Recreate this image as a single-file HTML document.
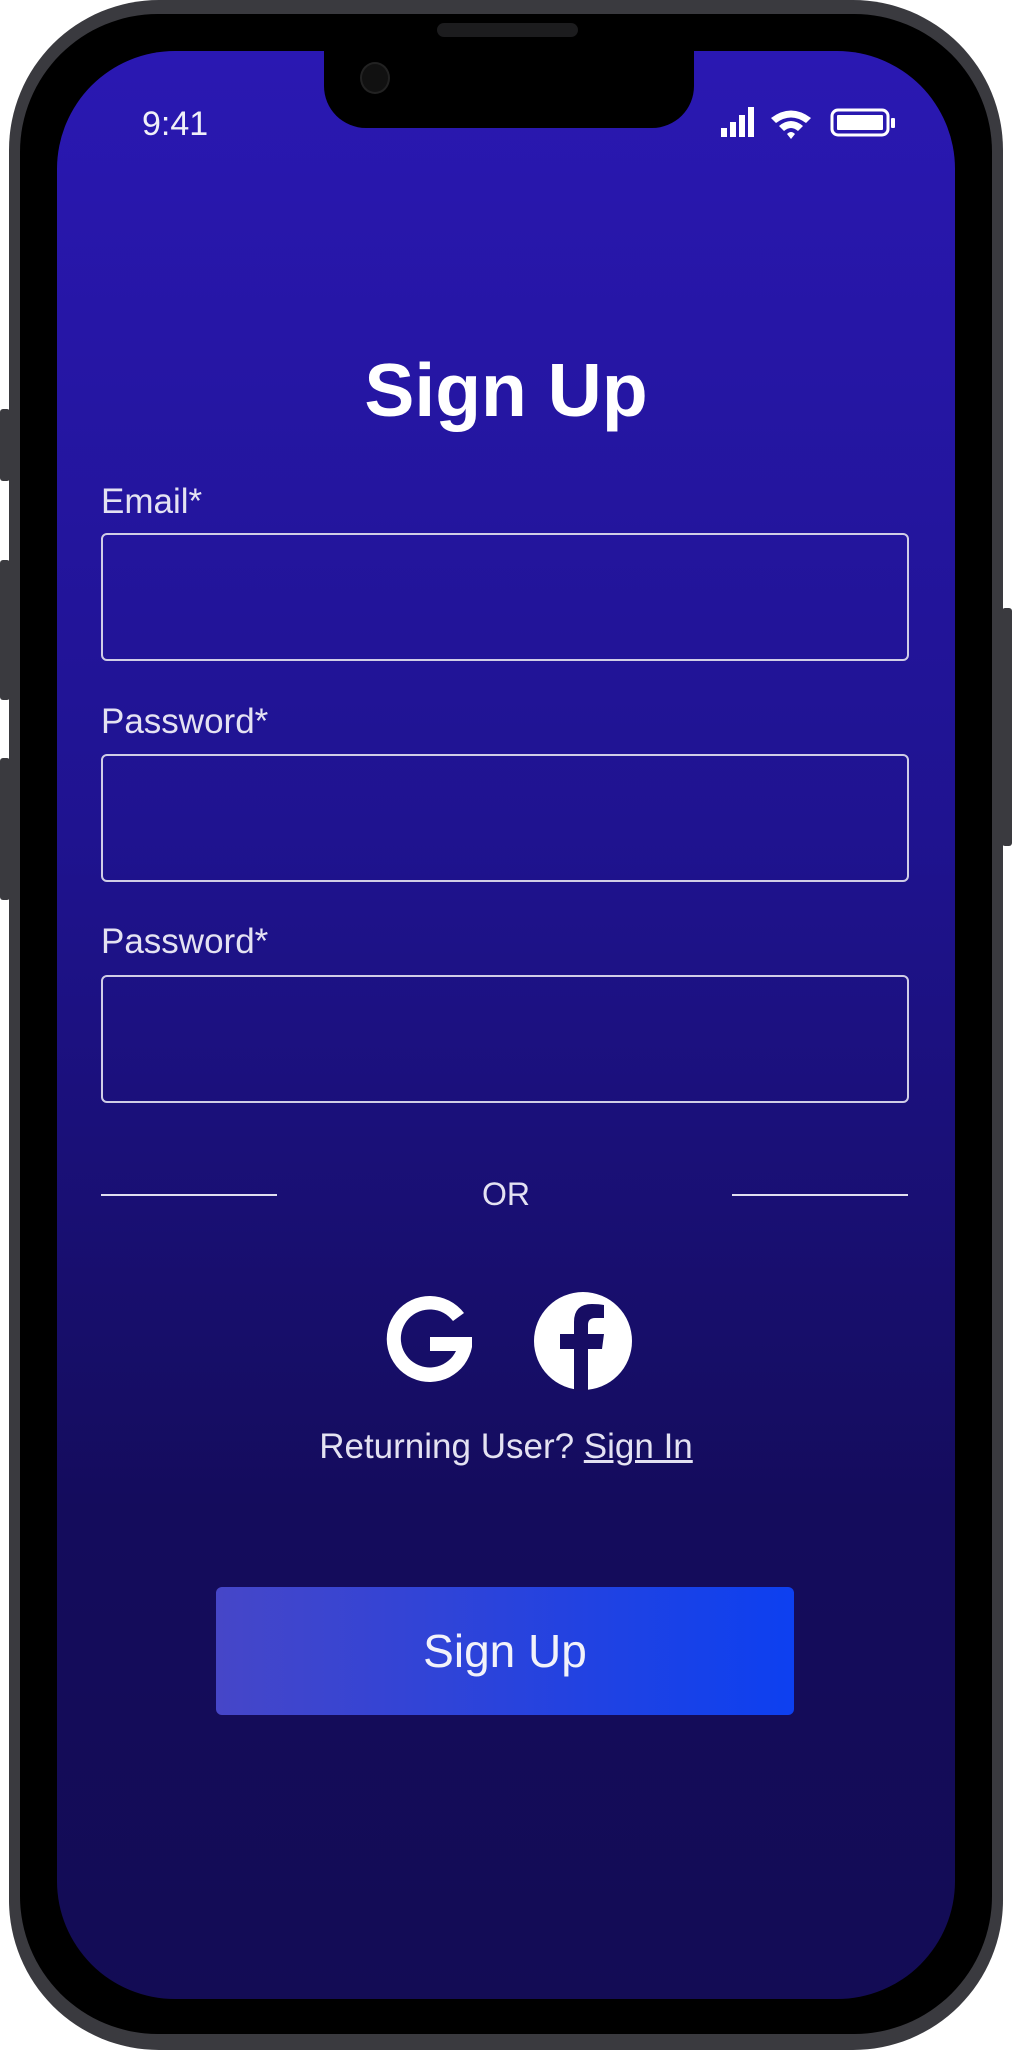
<!DOCTYPE html>
<html><head><meta charset="utf-8"><style>
*{margin:0;padding:0;box-sizing:border-box}
html,body{width:1012px;height:2050px;background:#fff;overflow:hidden;font-family:"Liberation Sans",sans-serif}
.frame{position:absolute;left:9px;top:0;width:994px;height:2050px;border-radius:150px;background:#3a3a3f;}
.bezel{position:absolute;left:20px;top:14px;width:972px;height:2020px;border-radius:138px;background:#000;}
.screen{position:absolute;left:57px;top:51px;width:898px;height:1948px;border-radius:118px;background:linear-gradient(180deg,#2a18b2 0%,#1f1390 40%,#140c5c 75%,#130c55 100%);overflow:hidden;color:#fff}
.notch{position:absolute;left:324px;top:40px;width:370px;height:88px;background:#000;border-radius:0 0 42px 42px}
.speaker{position:absolute;left:437px;top:23px;width:141px;height:14px;border-radius:7px;background:#1c1c1e}
.cam{position:absolute;left:360px;top:62px;width:30px;height:32px;border-radius:50%;background:#111;border:2px solid #222}
.btn{position:absolute;background:#3a3a3f;border-radius:3px}
.label{position:absolute;left:44px;font-size:35px;color:#e4e2f2}
.input{position:absolute;left:44px;width:808px;height:128px;border:2px solid #d0cde6;border-radius:6px}
.line{position:absolute;top:1143px;height:2px;background:#e0def0;width:176px}
</style></head><body>
<div class="frame"></div>
<div class="bezel"></div>
<div class="btn" style="left:0;top:409px;width:10px;height:72px"></div>
<div class="btn" style="left:0;top:560px;width:10px;height:140px"></div>
<div class="btn" style="left:0;top:758px;width:10px;height:142px"></div>
<div class="btn" style="left:1002px;top:608px;width:10px;height:238px"></div>
<div class="speaker"></div>
<div class="screen">
  <div style="position:absolute;left:85px;top:54px;font-size:34px;color:#f0f0f8">9:41</div>
  <svg style="position:absolute;left:662px;top:55px" width="180" height="34" viewBox="0 0 180 34">
    <rect x="2" y="22" width="6" height="9" fill="#fff"/><rect x="11" y="16" width="6" height="15" fill="#fff"/><rect x="20" y="9" width="6" height="22" fill="#fff"/><rect x="29" y="1" width="6" height="30" fill="#fff"/>
    <path d="M52 12 Q72 -3 92 12 L87 17 Q72 6 57 17Z M60 20 Q72 10 84 20 L79 25 Q72 19 65 25Z M68 28 Q72 24 76 28 L72 33Z" fill="#fff"/>
    <rect x="113" y="4" width="56" height="25" rx="6" fill="none" stroke="#fff" stroke-width="3"/>
    <rect x="118" y="9" width="46" height="15" rx="1" fill="#fff"/>
    <rect x="172" y="12" width="4" height="10" rx="1" fill="#fff"/>
  </svg>
  <div style="position:absolute;left:0;width:898px;top:296px;text-align:center;font-size:75px;font-weight:bold">Sign Up</div>
  <div class="label" style="top:431px">Email*</div>
  <div class="input" style="top:482px"></div>
  <div class="label" style="top:651px">Password*</div>
  <div class="input" style="top:703px"></div>
  <div class="label" style="top:871px">Password*</div>
  <div class="input" style="top:924px"></div>
  <div class="line" style="left:44px"></div>
  <div class="line" style="left:675px"></div>
  <div style="position:absolute;left:0;width:898px;top:1125px;text-align:center;font-size:32px;color:#e4e2f2">OR</div>
  <svg style="position:absolute;left:323px;top:1240px" width="100" height="100" viewBox="0 0 100 100">
    <path d="M84 22 A43 43 0 1 0 92 56 L92 46 L50 46 L50 60 L76 60 A29 29 0 1 1 73 30 Z" fill="#fff"/>
  </svg>
  <svg style="position:absolute;left:476px;top:1240px" width="100" height="100" viewBox="0 0 100 100">
    <circle cx="50" cy="50" r="49" fill="#fff"/>
    <path d="M55 100 L55 58 L69 58 L71 43 L55 43 L55 34 Q55 27 62 27 L71 27 L71 14 Q66 13 59 13 Q41 13 41 31 L41 43 L27 43 L27 58 L41 58 L41 100Z" fill="#170d63"/>
  </svg>
  <div style="position:absolute;left:0;width:898px;top:1376px;text-align:center;font-size:35px;color:#e4e2f2">Returning User? <span style="text-decoration:underline">Sign In</span></div>
  <div style="position:absolute;left:159px;top:1536px;width:578px;height:128px;border-radius:6px;background:linear-gradient(90deg,#4646c8,#0d40f0);text-align:center;line-height:128px;font-size:46px;color:#f2f2fa">Sign Up</div>
</div>
<div class="notch"></div>
<div class="cam"></div>
</body></html>
